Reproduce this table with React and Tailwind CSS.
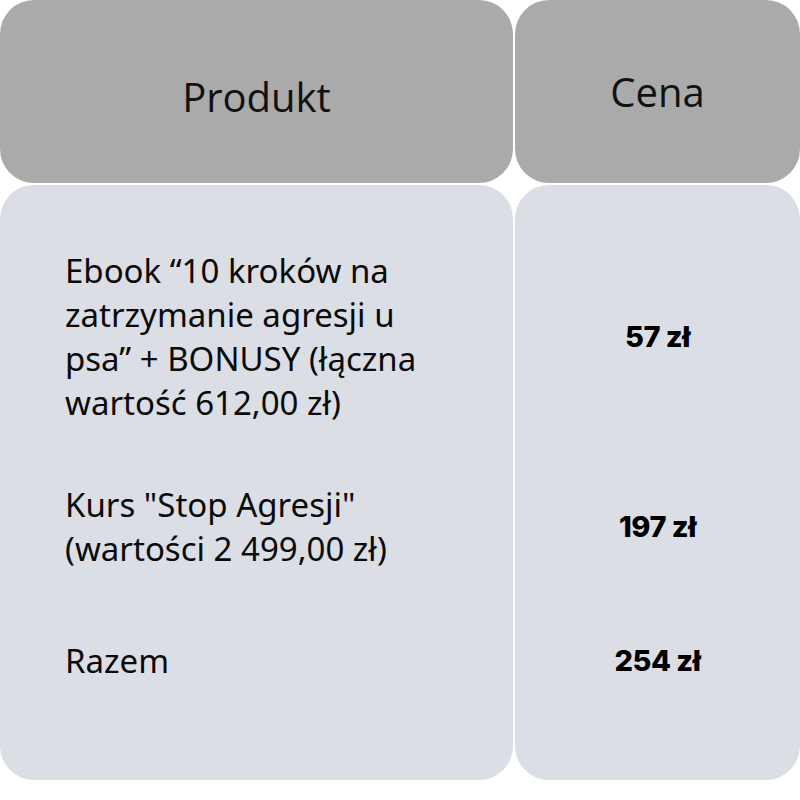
import React from "react";

const rows = [
  { h: "h-[176px]", text: ["Ebook “10 kroków na", "zatrzymanie agresji u", "psa” + BONUSY (łączna", "wartość 612,00 zł)"], price: "57 zł" },
  { h: "h-[88px]", text: ["Kurs \"Stop Agresji\"", "(wartości 2 499,00 zł)"], price: "197 zł" },
  { h: "h-[44px]", text: ["Razem"], price: "254 zł" },
];

const App = () => {
  return (
    <div className="w-[800px] h-[800px] bg-white flex flex-col gap-[2px]">
      {/* nagłówek */}
      <div className="flex gap-[2px] h-[183px]">
        <div className="w-[513px] rounded-[34px] bg-[#aaaaaa] flex items-center justify-center pt-[10px]">
          <span className="text-[40px] text-[#111] font-['Open_Sans',sans-serif]">Produkt</span>
        </div>
        <div className="flex-1 rounded-[34px] bg-[#aaaaaa] flex items-center justify-center">
          <span className="text-[40px] text-[#111] font-['Open_Sans',sans-serif]">Cena</span>
        </div>
      </div>

      {/* treść */}
      <div className="flex gap-[2px] h-[595px]">
        <div className="w-[513px] rounded-[34px] bg-[#dcdee6] flex flex-col pt-[64px] pl-[65px]">
          {rows.map((r, i) => (
            <div key={i} className={`${r.h} ${i === 1 ? "mt-[58px]" : i === 2 ? "mt-[68px]" : ""} flex flex-col`}>
              {r.text.map((t, j) => (
                <div key={j} className="h-[44px] leading-[44px] text-[33px] text-[#0a0a0a] font-['Noto_Sans',sans-serif] whitespace-nowrap">
                  {t}
                </div>
              ))}
            </div>
          ))}
        </div>
        <div className="flex-1 rounded-[34px] bg-[#dcdee6] flex flex-col pt-[64px]">
          {rows.map((r, i) => (
            <div key={i} className={`${r.h} ${i === 1 ? "mt-[58px]" : i === 2 ? "mt-[68px]" : ""} flex items-center justify-center`}>
              <span className="text-[29px] font-extrabold text-black tracking-[-0.5px] font-['Inter',sans-serif]">{r.price}</span>
            </div>
          ))}
        </div>
      </div>
    </div>
  );
};

export default App;
